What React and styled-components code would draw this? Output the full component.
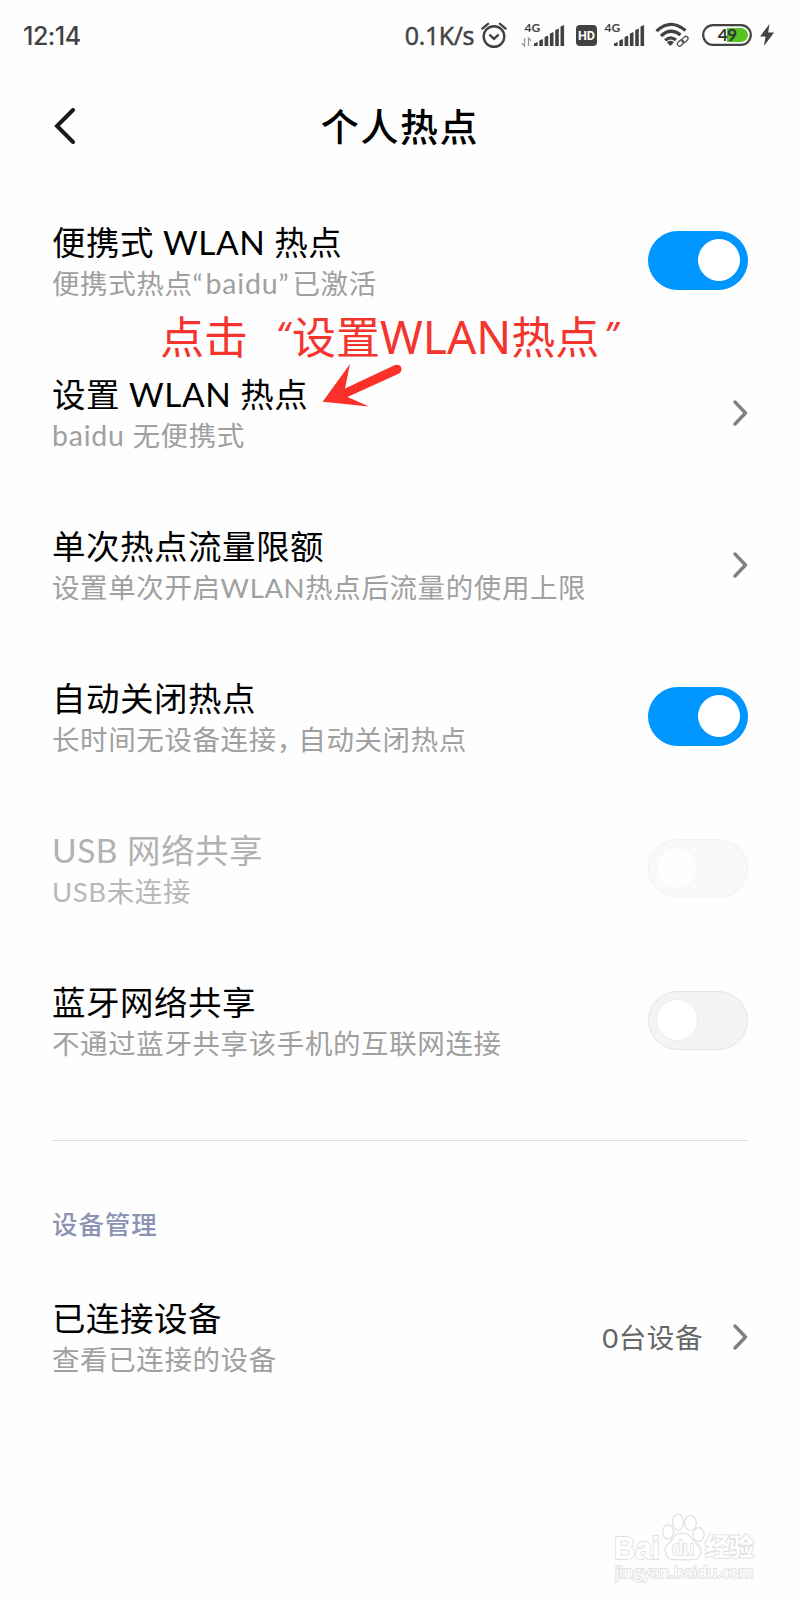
import React from 'react';
import styled, { createGlobalStyle } from 'styled-components';

const GlobalStyle = createGlobalStyle`
  * {
    box-sizing: border-box;
  }

  body {
    margin: 0;
    background: #fefefe;
    font-family: Lato, 'Noto Sans CJK SC', sans-serif;
  }
`;

const Screen = styled.div`
  position: relative;
  width: 800px;
  height: 1600px;
  overflow: hidden;
  color: #000;
`;

const StatusBar = styled.div`
  display: flex;
  align-items: center;
  justify-content: space-between;
  height: 70px;
  padding: 0 26px 0 23px;
  color: #424242;
`;

const Clock = styled.span`
  padding-top: 2px;
  font: 500 25px/30px Inter, sans-serif;
  letter-spacing: -0.5px;
`;

const StatusIcons = styled.div`
  display: flex;
  align-items: center;

  svg {
    display: block;
    flex: none;
  }
`;

const Speed = styled.span`
  margin-right: 6px;
  font: 400 25px/30px 'Open Sans', sans-serif;
  letter-spacing: -0.4px;
  -webkit-text-stroke: 0.5px #424242;
`;

const Signal = styled.div`
  margin-left: ${props => props.$gap}px;
`;

const Header = styled.header`
  display: grid;
  grid-template-columns: 100px 1fr 100px;
  align-items: center;
  height: 112px;
  margin-bottom: 2px;
`;

const BackButton = styled.button`
  display: flex;
  margin-left: 52px;
  padding: 0;
  border: 0;
  background: none;
`;

const PageTitle = styled.h1`
  margin: 0;
  font-size: 38px;
  font-weight: 500;
  line-height: 50px;
  letter-spacing: 1.6px;
  text-align: center;
`;

const Row = styled.div`
  display: flex;
  align-items: center;
  justify-content: space-between;
  height: 152px;
  padding: 0 52px;
`;

const RowText = styled.div`
  padding-top: 5px;
`;

const RowTitle = styled.div`
  font-size: 33.5px;
  line-height: 42px;
  letter-spacing: 0.5px;
  white-space: pre;
  color: ${props => (props.$disabled ? '#b2b2b2' : '#000')};
`;

const RowNote = styled.div`
  font-size: 27.5px;
  line-height: 41px;
  letter-spacing: 0.6px;
  white-space: pre;
  color: ${props => (props.$disabled ? '#b8b8b8' : '#a0a0a0')};
`;

const Comma = styled.span`
  letter-spacing: -6px;
`;

const NetName = styled.span`
  font-size: 28.5px;
  line-height: 1;
  letter-spacing: 0.8px;
`;

const NoteQuote = styled.span`
  letter-spacing: ${props => props.$space}px;
`;

const Switch = styled.div`
  display: flex;
  align-items: center;
  justify-content: ${props => (props.$on ? 'flex-end' : 'flex-start')};
  width: 100px;
  height: 59px;
  padding: 0 7px;
  border: 1px solid ${props => (props.$on ? '#0096ff' : '#e4e4e4')};
  border-radius: 30px;
  background: ${props => (props.$on ? '#0096ff' : '#f4f4f4')};
  opacity: ${props => (props.$disabled ? 0.45 : 1)};
`;

const Knob = styled.span`
  width: 42px;
  height: 42px;
  border: 1px solid ${props => (props.$on ? '#fff' : '#ececec')};
  border-radius: 50%;
  background: #fff;
`;

const Arrow = styled.svg`
  margin-top: 2px;
`;

const RowValue = styled.div`
  display: flex;
  align-items: center;
  gap: 29px;
  font-size: 27.5px;
  letter-spacing: 0.6px;
  color: #666;
`;

const Divider = styled.hr`
  height: 1px;
  margin: 44px 52px 0;
  border: 0;
  background: #dcdcdc;
`;

const SectionTitle = styled.h2`
  margin: 0;
  padding: 63px 52px 16px;
  font-size: 25.5px;
  font-weight: 500;
  line-height: 40px;
  letter-spacing: 0.9px;
  color: #8b93b3;
`;

const Callout = styled.div`
  position: absolute;
  top: 307px;
  left: 160px;
  display: flex;
  font: 44px/60px 'Noto Sans', 'Noto Sans CJK SC', sans-serif;
  white-space: pre;
  color: #f3352e;
`;

const Latin = styled.span`
  font-size: 46px;
  line-height: 1;
`;

const Quote = styled.span`
  width: ${props => props.$width}px;
  padding-right: ${props => props.$pad || 0}px;
  font-size: 36px;
  line-height: 56px;
  text-align: right;
  font-style: italic;
`;

const CalloutArrow = styled.svg`
  position: absolute;
  top: 360px;
  left: 320px;
`;

const Watermark = styled.div`
  position: absolute;
  top: 1512px;
  left: 614px;
  width: 150px;
`;

function BackIcon() {
  return (
    <svg width="24" height="36" viewBox="0 0 24 36" fill="none">
      <path d="M21 2 L5 18 L21 34" stroke="#1a1a1a" strokeWidth="4" strokeLinecap="round" />
    </svg>
  );
}

function Chevron() {
  return (
    <Arrow width="16" height="26" viewBox="0 0 16 26" fill="none">
      <path d="M3 2 L13.5 13 L3 24" stroke="#808080" strokeWidth="3.4" strokeLinecap="round" strokeLinejoin="round" />
    </Arrow>
  );
}

function AlarmIcon() {
  return (
    <svg width="28" height="28" viewBox="0 0 28 28" fill="none" stroke="#424242" strokeLinecap="round">
      <circle cx="14" cy="15.5" r="10.3" strokeWidth="2.4" />
      <path d="M10 14.2 L14 17.8 L18 14.2" strokeWidth="2.4" />
      <path d="M2.4 7.6 L8 2.8 M20 2.8 L25.6 7.6" strokeWidth="2.4" />
    </svg>
  );
}

function SignalIcon({ arrows }) {
  const bars = [4, 7, 10.5, 14, 17.5, 21];
  return (
    <svg width="44" height="28" viewBox="0 0 44 28">
      <text x="3.5" y="11" fontSize="12" fontWeight="700" fontFamily="Lato, sans-serif" fill="#424242">4G</text>
      {arrows && (
        <path d="M3.5 17 V25 L0.8 22.3 M7.5 25 V17 L10.2 19.7" fill="none" stroke="#999" strokeWidth="1.3" />
      )}
      {bars.map((h, i) => (
        <path
          key={h}
          d={`M${13 + i * 5.3} 25 v${-h + 1.5} l3.6 -1.5 v${h} z`}
          fill="#424242"
        />
      ))}
    </svg>
  );
}

function HdIcon() {
  return (
    <svg width="21" height="21" viewBox="0 0 21 21">
      <rect width="21" height="21" rx="4" fill="#424242" />
      <text x="2" y="15.3" fontSize="13.5" fontWeight="700" fontFamily="Roboto, sans-serif" textLength="17" lengthAdjust="spacingAndGlyphs" fill="#fff">HD</text>
    </svg>
  );
}

function WifiIcon() {
  return (
    <svg width="36" height="26" viewBox="0 0 36 26" fill="none">
      <g stroke="#424242" strokeWidth="3.2">
        <path d="M1.5 9.2 Q15.5 -4 30.5 8.5" />
        <path d="M6 14 Q15.5 5 25.5 13" />
        <path d="M10.2 18.4 Q15.5 13.6 21 18" />
      </g>
      <path d="M11.8 20.2 Q15.5 17.4 19 20.2 L15.4 24 z" fill="#424242" />
      <g stroke="#fefefe" strokeWidth="4">
        <rect x="22.4" y="17.6" width="8" height="5" rx="2.5" transform="rotate(-42 26 20)" />
      </g>
      <g stroke="#555" strokeWidth="1.3">
        <rect x="22" y="18.8" width="7" height="4.4" rx="2.2" transform="rotate(-42 25.5 21)" />
        <rect x="26.4" y="15.2" width="7" height="4.4" rx="2.2" transform="rotate(-42 29.9 17.4)" />
      </g>
    </svg>
  );
}

function BatteryIcon() {
  return (
    <svg width="50" height="22" viewBox="0 0 50 22">
      <rect x="1.2" y="1.2" width="47.6" height="19.6" rx="9.8" fill="#fff" stroke="#424242" strokeWidth="2.2" />
      <path d="M25 4 H39 a7 7 0 0 1 0 14 H25 z" fill="#58c322" />
      <text x="25" y="17" fontSize="17.5" fontWeight="700" fontFamily="Lato, sans-serif" textAnchor="middle" letterSpacing="-0.8" fill="#333">49</text>
    </svg>
  );
}

function BoltIcon() {
  return (
    <svg width="14" height="22" viewBox="0 0 14 22">
      <path d="M9.5 0 L0 12.5 H5.5 L4 22 L14 8.5 H8.2 z" fill="#424242" />
    </svg>
  );
}

function BaiduMark() {
  const outline = { fill: '#fff', stroke: '#e0e0e0', strokeWidth: 1.2 };
  return (
    <svg width="150" height="74" viewBox="0 0 150 74">
      <g {...outline}>
        <ellipse cx="54" cy="20" rx="5.5" ry="7.2" />
        <ellipse cx="64" cy="10" rx="5.3" ry="8" />
        <ellipse cx="76.5" cy="11" rx="5.7" ry="7.5" />
        <ellipse cx="84.5" cy="22.5" rx="5.5" ry="6.8" />
        <path d="M68 21 C60 21 59 28 54 32 C49 36 51 47 59 47.5 C64 48 73 48 79 47.5 C88 47 89 37 83 32 C78 28 76 21 68 21 z" />
      </g>
      <g {...outline} paintOrder="stroke" strokeWidth="1.8" fontWeight="700">
        <text x="0" y="46.5" fontSize="32" fontFamily="Liberation Sans, sans-serif" textLength="46" lengthAdjust="spacingAndGlyphs">Bai</text>
        <text x="58" y="43" fontSize="20" fontFamily="Liberation Sans, sans-serif" textLength="22" fontWeight="400">du</text>
        <text x="91" y="44" fontSize="25" fontFamily="Noto Sans CJK SC, sans-serif" textLength="49">经验</text>
        <text x="1" y="65.5" fontSize="15.5" fontFamily="Open Sans, sans-serif" fontWeight="400" textLength="139" lengthAdjust="spacingAndGlyphs">jingyan.baidu.com</text>
      </g>
    </svg>
  );
}

function Setting({ title, note, on, disabled, children }) {
  return (
    <Row>
      <RowText>
        <RowTitle $disabled={disabled}>{title}</RowTitle>
        <RowNote $disabled={disabled}>{note}</RowNote>
      </RowText>
      {children || (
        <Switch $on={on} $disabled={disabled}>
          <Knob $on={on} />
        </Switch>
      )}
    </Row>
  );
}

export default function App() {
  return (
    <Screen>
      <GlobalStyle />
      <StatusBar>
        <Clock>12:14</Clock>
        <StatusIcons>
          <Speed>0.1K/s</Speed>
          <AlarmIcon />
          <Signal $gap={13}><SignalIcon arrows /></Signal>
          <Signal $gap={11}><HdIcon /></Signal>
          <Signal $gap={4}><SignalIcon /></Signal>
          <Signal $gap={10}><WifiIcon /></Signal>
          <Signal $gap={11}><BatteryIcon /></Signal>
          <Signal $gap={8}><BoltIcon /></Signal>
        </StatusIcons>
      </StatusBar>

      <Header>
        <BackButton aria-label="返回"><BackIcon /></BackButton>
        <PageTitle>个人热点</PageTitle>
      </Header>

      <Setting
        title="便携式 WLAN 热点"
        note={
          <>
            便携式热点<NoteQuote $space={3}>“</NoteQuote>
            <NetName>baidu</NetName>
            <NoteQuote $space={4}>”</NoteQuote>已激活
          </>
        }
        on
      />
      <Setting title="设置 WLAN 热点" note={<><NetName>baidu</NetName> 无便携式</>}><Chevron /></Setting>
      <Setting title="单次热点流量限额" note="设置单次开启WLAN热点后流量的使用上限"><Chevron /></Setting>
      <Setting
        title="自动关闭热点"
        note={<>长时间无设备连接<Comma>，</Comma>自动关闭热点</>}
        on
      />
      <Setting title="USB 网络共享" note="USB未连接" disabled />
      <Setting title="蓝牙网络共享" note="不通过蓝牙共享该手机的互联网连接" />

      <Divider />
      <SectionTitle>设备管理</SectionTitle>
      <Setting title="已连接设备" note="查看已连接的设备">
        <RowValue>
          <span>0台设备</span>
          <Chevron />
        </RowValue>
      </Setting>

      <Callout>
        <span>点击</span>
        <Quote $width={44} $pad={3}>“</Quote>
        <span>设置<Latin>WLAN</Latin>热点</span>
        <Quote $width={18}>”</Quote>
      </Callout>
      <CalloutArrow width="84" height="50" viewBox="0 0 84 50">
        <path d="M2.6 41.7 L30 4 L25 28.5 L75 5 Q80 4 81.5 8 Q82 12 78 14 L27.5 37 L49 46.5 z" fill="#fb3029" />
      </CalloutArrow>

      <Watermark><BaiduMark /></Watermark>
    </Screen>
  );
}
